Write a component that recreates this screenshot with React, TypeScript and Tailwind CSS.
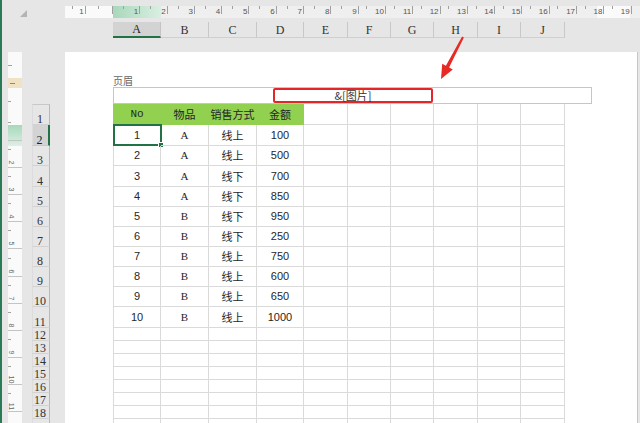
import React from "react";

const COLS = [48, 48, 48, 47, 44, 43, 43, 44, 43, 44];
const LETTERS = ["A", "B", "C", "D", "E", "F", "G", "H", "I", "J"];
const ROW_H = [21, 21, 20, 21, 20, 20, 20, 20, 20, 20, 21, 13, 13, 13, 13, 13, 13, 13, 13];

const W: Record<number, string> = {
  48: "w-[48px]",
  47: "w-[47px]",
  44: "w-[44px]",
  43: "w-[43px]",
};
const H: Record<number, string> = {
  21: "h-[21px]",
  20: "h-[20px]",
  13: "h-[13px]",
};

const HEAD = ["No", "物品", "销售方式", "金额"];
const DATA = [
  ["1", "A", "线上", "100"],
  ["2", "A", "线上", "500"],
  ["3", "A", "线下", "700"],
  ["4", "A", "线下", "850"],
  ["5", "B", "线下", "950"],
  ["6", "B", "线下", "250"],
  ["7", "B", "线上", "750"],
  ["8", "B", "线上", "600"],
  ["9", "B", "线上", "650"],
  ["10", "B", "线上", "1000"],
];

const cjk = "font-['Noto_Sans_CJK_SC',sans-serif]";
const serif = "font-['Liberation_Serif','Noto_Sans_CJK_SC',serif]";
const mono = "font-['Liberation_Mono',monospace]";
const sans = "font-['Liberation_Sans','Noto_Sans_CJK_SC',sans-serif]";

const DATA_FONT = [sans, serif, cjk, sans];
const HEAD_FONT = [mono, cjk, cjk, cjk];

const RulerSeg = ({ className, n }: { className: string; n: string }) => (
  <div className={`flex shrink-0 items-start ${className}`}>
    <div className="flex-1" />
    <div className="w-px h-[3px] bg-[#a0a0a0]" />
    <div className="flex-1" />
    <span className="text-[8px] leading-[11px] text-[#555] pr-[1px]">{n}</span>
    <div className="w-px h-[8px] bg-[#a0a0a0]" />
  </div>
);

const TopRuler = () => (
  <div className="mt-[6px] h-[12px] flex bg-[linear-gradient(to_right,#fafafa_0,#fafafa_48px,#a8d8bb_48px,#d9efe1_96px,#efefef_96px,#efefef_532px,#fafafa_532px,#fafafa_565px,#efefef_565px)]">
    <RulerSeg className="w-[20.7px]" n="1" />
    <RulerSeg className="w-[27.3px]" n="" />
    {Array.from({ length: 19 }, (_, i) => (
      <RulerSeg key={i} className="w-[27.3px]" n={String(i + 1)} />
    ))}
  </div>
);

const ColHeaders = () => (
  <div className={`mt-[4px] h-[16px] pl-[48px] flex ${serif}`}>
    {COLS.map((w, i) => (
      <div
        key={i}
        className={`${W[w]} shrink-0 flex items-end justify-center text-[12px] leading-[14px] border-r ${
          i === 0
            ? "bg-[#d3d3d3] border-b-2 border-b-[#217346] border-r-[#c4c4c4] text-[#222]"
            : "border-b border-b-[#d0d0d0] border-r-[#c8c8c8] text-[#333]"
        }`}
      >
        {LETTERS[i]}
      </div>
    ))}
  </div>
);

const LeftRuler = () => (
  <div className="w-[14px] shrink-0 flex flex-col">
    <div className="h-[26px] bg-[#fafafa] flex flex-col justify-center">
      <div className="w-[4px] h-px bg-[#a0a0a0]" />
    </div>
    <div className="h-[10px] bg-[#f1e2c4] flex items-center">
      <div className="ml-[2px] w-[5px] h-px bg-[#8a8a8a]" />
    </div>
    <div className="h-[26px] bg-[#fafafa] flex flex-col justify-center">
      <div className="w-[3px] h-px bg-[#a0a0a0]" />
    </div>
    <div className="flex-1 flex flex-col bg-[linear-gradient(to_bottom,#fafafa_0,#fafafa_11px,#a8d8bb_11px,#dcf0e3_32px,#fafafa_32px)]">
      {Array.from({ length: 11 }, (_, i) => (
        <div key={i} className="h-[27.1px] shrink-0 flex flex-col">
          <div className="flex-1" />
          <div className="w-[3px] h-px bg-[#a0a0a0]" />
          <div className="flex-1" />
          <div className="h-[9px] w-[8px] flex items-center justify-center">
            <span className="rotate-90 text-[7px] leading-[7px] text-[#666]">{i === 0 ? "" : i + 1}</span>
          </div>
          <div className="h-px w-full bg-[#c4c4c4]" />
        </div>
      ))}
    </div>
  </div>
);

const RowHeaders = () => (
  <div className={`w-[18px] shrink-0 pt-[52px] flex flex-col ${serif}`}>
    {ROW_H.map((h, r) => (
      <div
        key={r}
        className={`${H[h]} shrink-0 flex items-end justify-center pr-[2px] text-[12px] leading-[10px] border-b border-r border-l border-l-[#dcdcdc] ${
          r === 0 ? "border-t border-t-[#c8c8c8]" : ""
        } ${
          r === 1
            ? "bg-[#d3d3d3] border-r-2 border-r-[#217346] border-b-[#c8c8c8] text-[#222]"
            : "border-b-[#d2d2d2] border-r-[#b9b9b9] text-[#333]"
        }`}
      >
        {r < 18 ? r + 1 : ""}
      </div>
    ))}
  </div>
);

const Grid = () => (
  <div className="flex flex-col">
    {ROW_H.map((h, r) => (
      <div key={r} className={`flex shrink-0 ${H[h]}`}>
        {COLS.map((w, c) => {
          const green = r === 0 && c < 4;
          const text = r === 0 && c < 4 ? HEAD[c] : r >= 1 && r <= 10 && c < 4 ? DATA[r - 1][c] : "";
          const font = r === 0 ? HEAD_FONT[c] : DATA_FONT[c];
          return (
            <div
              key={c}
              className={`${W[w]} shrink-0 relative flex items-center justify-center border-b border-r text-[11px] leading-none text-[#262626] ${font} ${
                c === 0 ? "border-l" : ""
              } ${green ? "bg-[#92d050] border-[#92d050]" : "border-[#dadada]"}`}
            >
              {text}
              {r === 1 && c === 0 && (
                <div className="absolute -left-px -top-px w-[49px] h-[22px] border-2 border-[#217346]">
                  <div className="absolute -right-[4px] -bottom-[4px] w-[6px] h-[6px] bg-[#217346] border border-white" />
                </div>
              )}
            </div>
          );
        })}
      </div>
    ))}
  </div>
);

const Page = () => (
  <div className="w-[573px] shrink-0 bg-white border-r border-[#c6c6c6] pl-[48px]">
    <div className={`pt-[22px] h-[35px] text-[10px] leading-[13px] text-[#666] ${cjk}`}>页眉</div>
    <div className="w-[479px] h-[17px] border border-[#c6c6c6] flex">
      <div className="w-[159px] shrink-0" />
      <div
        className={`w-[160px] shrink-0 border-2 border-[#e3262a] rounded-[2px] flex items-center justify-center text-[11px] leading-none text-[#333] ${cjk}`}
      >
        &amp;[图片]
      </div>
    </div>
    <Grid />
  </div>
);

export default function App() {
  return (
    <div className={`relative w-[640px] h-[423px] overflow-hidden bg-[#e6e6e6] flex ${sans}`}>
      <div className="w-[2px] shrink-0 bg-[#2b7b57]" />
      <div className="flex-1 flex flex-col min-w-0">
        <div className="h-[52px] shrink-0 flex">
          <div className="w-[63px] shrink-0 pt-[10px] pl-[18px]">
            <svg width="8" height="8" viewBox="0 0 8 8">
              <polygon points="7,0 7,7 0,7" fill="#b4b4b4" />
            </svg>
          </div>
          <div className="flex-1 flex flex-col min-w-0">
            <TopRuler />
            <ColHeaders />
          </div>
        </div>
        <div className="flex-1 flex min-h-0">
          <div className="w-[6px] shrink-0" />
          <LeftRuler />
          <div className="w-[10px] shrink-0" />
          <RowHeaders />
          <div className="w-[15px] shrink-0" />
          <Page />
        </div>
      </div>
      <svg className="absolute inset-0 pointer-events-none" width="640" height="423" viewBox="0 0 640 423">
        <polygon
          points="462.1,36.5 463.9,37.5 449.1,67.4 452.8,69.4 441,79 442.2,63.8 445.9,65.8"
          fill="#e82a26"
        />
      </svg>
    </div>
  );
}
